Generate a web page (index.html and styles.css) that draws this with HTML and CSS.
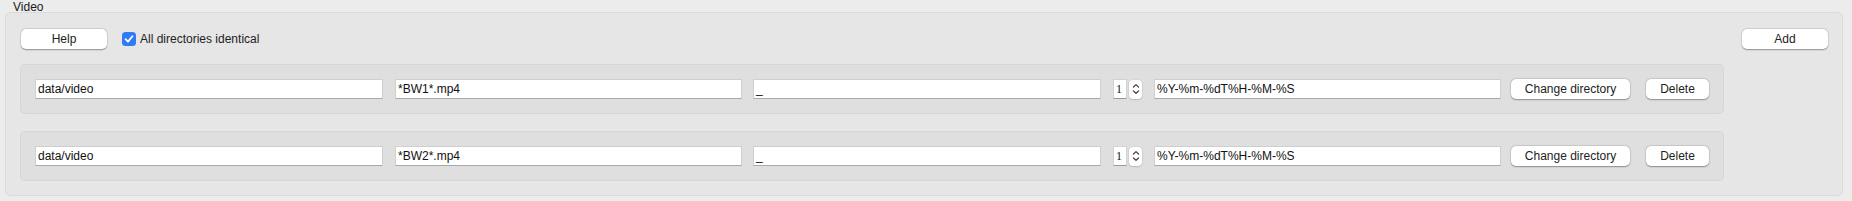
FILE: index.html
```html
<!DOCTYPE html>
<html>
<head>
<meta charset="utf-8">
<link rel="stylesheet" href="styles.css">
</head>
<body>
<div class="group">
  <div class="legend">Video</div>
  <div class="frame">
    <div class="toolbar">
      <button class="btn btn-help">Help</button>
      <label class="check">
        <span class="box"><svg width="10" height="10" viewBox="0 0 10 10"><path d="M1.6 5.2 L4 7.6 L8.4 2.2" fill="none" stroke="#fff" stroke-width="1.8" stroke-linecap="round" stroke-linejoin="round"/></svg></span>
        All directories identical
      </label>
      <span class="spacer"></span>
      <button class="btn btn-add">Add</button>
    </div>
    <div class="row">
      <div class="field f1">data/video</div>
      <div class="field f2">*BW1*.mp4</div>
      <div class="field f3">_</div>
      <div class="spin">
        <div class="num">1</div>
        <div class="arrows">
          <svg width="12" height="14" viewBox="0 0 12 14"><path d="M3.5 5 L6 2.6 L8.5 5" fill="none" stroke="#444" stroke-width="1.3" stroke-linecap="round" stroke-linejoin="round"/><path d="M3.5 9 L6 11.4 L8.5 9" fill="none" stroke="#444" stroke-width="1.3" stroke-linecap="round" stroke-linejoin="round"/></svg>
        </div>
      </div>
      <div class="field f4">%Y-%m-%dT%H-%M-%S</div>
      <button class="btn btn-change">Change directory</button>
      <button class="btn btn-delete">Delete</button>
    </div>
    <div class="row">
      <div class="field f1">data/video</div>
      <div class="field f2">*BW2*.mp4</div>
      <div class="field f3">_</div>
      <div class="spin">
        <div class="num">1</div>
        <div class="arrows">
          <svg width="12" height="14" viewBox="0 0 12 14"><path d="M3.5 5 L6 2.6 L8.5 5" fill="none" stroke="#444" stroke-width="1.3" stroke-linecap="round" stroke-linejoin="round"/><path d="M3.5 9 L6 11.4 L8.5 9" fill="none" stroke="#444" stroke-width="1.3" stroke-linecap="round" stroke-linejoin="round"/></svg>
        </div>
      </div>
      <div class="field f4">%Y-%m-%dT%H-%M-%S</div>
      <button class="btn btn-change">Change directory</button>
      <button class="btn btn-delete">Delete</button>
    </div>
  </div>
</div>
</body>
</html>
```
FILE: styles.css
```css
html, body {
  margin: 0;
  padding: 0;
  background: #ececec;
  font-family: "Liberation Sans", Arial, sans-serif;
  font-size: 12px;
  color: #1e1e1e;
}
.group {
  padding: 0 9px 0 5px;
}
.legend {
  height: 12px;
  line-height: 15px;
  padding-left: 8px;
  font-size: 12px;
  color: #1a1a1a;
}
.frame {
  background: #e6e6e6;
  border: 1px solid #dadada;
  border-radius: 5px;
  padding: 16px 14px 14px 14px;
  display: flex;
  flex-direction: column;
  gap: 17px;
  height: 184px;
  box-sizing: border-box;
}
.toolbar {
  display: flex;
  align-items: center;
  height: 20px;
  padding-left: 1px;
  margin-bottom: -2px;
}
.spacer { flex: 1; }
.btn {
  font-family: "Liberation Sans", Arial, sans-serif;
  font-size: 12px;
  color: #222;
  background: #fff;
  border: none;
  border-radius: 5px;
  box-shadow: 0 0.5px 1.5px rgba(0,0,0,0.35), 0 0 0 0.5px rgba(0,0,0,0.08);
  height: 20px;
  padding: 0;
  margin: 0;
  line-height: 20px;
  text-align: center;
}
.btn-help { width: 86px; }
.btn-add { width: 86px; margin-right: 0; }
.check {
  display: flex;
  align-items: center;
  margin-left: 15px;
  gap: 4px;
  color: #222;
  line-height: 14px;
}
.box {
  width: 14px;
  height: 14px;
  border-radius: 3.5px;
  background: #2f7bf5;
  display: flex;
  align-items: center;
  justify-content: center;
}
.row {
  background: #dfdfdf;
  border: 1px solid #d6d6d6;
  border-radius: 5px;
  width: 1704px;
  height: 50px;
  box-sizing: border-box;
  padding: 0 14px;
  display: flex;
  align-items: center;
}
.field {
  height: 20px;
  box-sizing: border-box;
  background: #fff;
  border: 1px solid #cfcfcf;
  border-bottom-color: #a9a9a9;
  padding: 0 2px;
  line-height: 18px;
  color: #111;
  white-space: nowrap;
  overflow: hidden;
}
.f1 { width: 348px; }
.f2 { width: 347px; margin-left: 12px; }
.f3 { width: 348px; margin-left: 11px; }
.f4 { width: 347px; margin-left: 12px; }
.spin {
  display: flex;
  align-items: center;
  margin-left: 12px;
  height: 20px;
}
.num {
  width: 14px;
  height: 20px;
  box-sizing: border-box;
  background: #fff;
  border: 1px solid #d2d2d2;
  border-bottom-color: #9a9a9a;
  font-family: "Liberation Serif", "Times New Roman", serif;
  font-size: 12px;
  line-height: 18px;
  padding-left: 2px;
  color: #111;
}
.arrows {
  width: 13px;
  height: 19px;
  margin-left: 2px;
  background: #fff;
  border-radius: 4px;
  box-shadow: 0 0.5px 1.5px rgba(0,0,0,0.3);
  display: flex;
  align-items: center;
  justify-content: center;
}
.btn-change { width: 119px; margin-left: 10px; }
.btn-delete { width: 63px; margin-left: 16px; }
```
